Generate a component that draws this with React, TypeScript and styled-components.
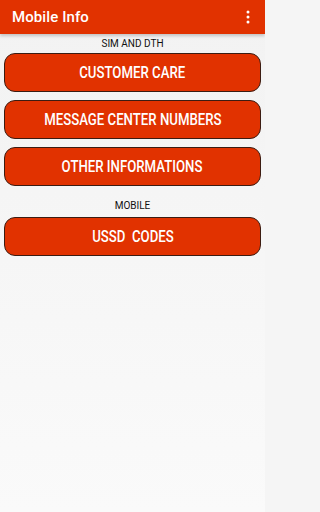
import React from 'react';
import styled, { createGlobalStyle } from 'styled-components';

const Global = createGlobalStyle`
  html, body {
    margin: 0;
    padding: 0;
    background: #f5f5f5;
  }
  body {
    font-family: Roboto, "Noto Sans", "Liberation Sans", sans-serif;
  }
`

const sections = [
  { title: 'SIM AND DTH', items: ['CUSTOMER CARE', 'MESSAGE CENTER NUMBERS', 'OTHER INFORMATIONS'] },
  { title: 'MOBILE', items: ['USSD\u00a0\u00a0CODES'] },
]

export default function App() {
  return (
    <Screen>
      <Global />
      <Toolbar>
        <Title>Mobile Info</Title>
        <Overflow aria-label="more">
          <svg width="4" height="14" viewBox="0 0 4 14">
            <circle cx="2" cy="2" r="1.5" fill="#fff" />
            <circle cx="2" cy="7" r="1.5" fill="#fff" />
            <circle cx="2" cy="12" r="1.5" fill="#fff" />
          </svg>
        </Overflow>
      </Toolbar>
      <Content>
        {sections.map((s, i) => (
          <Section key={s.title}>
            <Label first={i === 0}>{s.title}</Label>
            {s.items.map(item => (
              <MenuButton key={item}>
                <ButtonText>{item}</ButtonText>
              </MenuButton>
            ))}
          </Section>
        ))}
      </Content>
    </Screen>
  )
}

const Screen = styled.div`
  width: 265px;
  height: 512px;
  background: linear-gradient(#f2f2f2, #fafafa);
  overflow: hidden;
`

const Toolbar = styled.div`
  height: 34px;
  background: #e13200;
  display: flex;
  align-items: center;
  justify-content: space-between;
  padding: 0 15px 0 12px;
  box-sizing: border-box;
  box-shadow: 0 2px 3px rgba(0, 0, 0, 0.2);
  position: relative;
`

const Title = styled.div`
  color: #fff;
  font-size: 15px;
  font-weight: 500;
  letter-spacing: 0.1px;
`

const Overflow = styled.div`
  display: flex;
  align-items: center;
`

const Content = styled.div`
  padding: 0 4px;
  display: flex;
  flex-direction: column;
`

const Section = styled.div`
  display: flex;
  flex-direction: column;
  gap: 8px;
`

const Label = styled.div<{ first: boolean }>`
  text-align: center;
  font-size: 10px;
  color: #111;
  line-height: ${p => p.first ? '19px' : '22px'};
  margin-top: ${p => p.first ? '0' : '9px'};
  margin-bottom: -8px;
`

const MenuButton = styled.div`
  height: 39px;
  box-sizing: border-box;
  border: 1.5px solid #3b1c12;
  border-radius: 11px;
  background: #e13200;
  display: flex;
  align-items: center;
  justify-content: center;
`

const ButtonText = styled.span`
  color: #fff;
  font-size: 16.5px;
  font-weight: 500;
  white-space: nowrap;
  transform: scaleX(0.8);
`
